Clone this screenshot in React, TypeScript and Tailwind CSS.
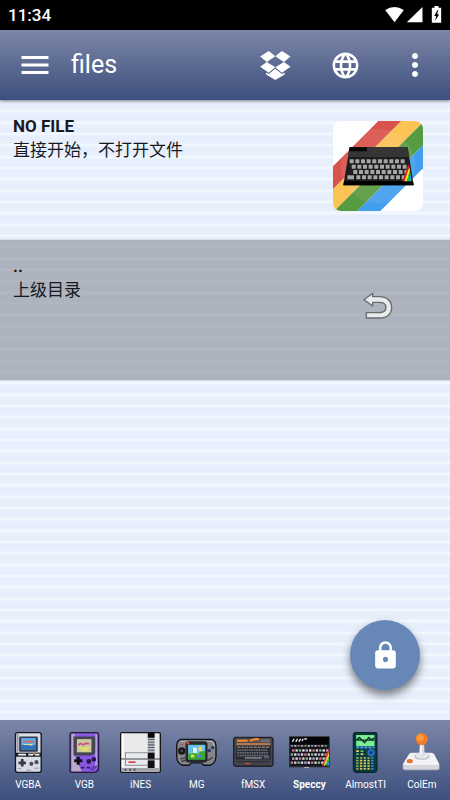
import React, { useState } from 'react';
import { MdLanguage, MdLock, MdMenu, MdMoreVert } from 'react-icons/md';

const range = (n: number) => Array.from({ length: n }, (_, i) => i);

const StatusBar: React.FC = () => (
  <div className="h-[30px] bg-black text-white flex items-center justify-between px-2">
    <span className="text-[17px] leading-[30px] font-medium">11:34</span>
    <svg viewBox="0 0 170 54" className="w-[57px] h-[18px]" fill="#fff">
      <path d="M0 12 Q28 -6 56 12 L28 49 Z" />
      <path d="M65 49 L112 3 L112 49 Z" />
      <path d="M140 5 h8 v-5 h12 v5 h8 v45 h-28 Z" />
      <path d="M157 12 L147 30 h6 l-3 14 L162 25 h-6 l3 -13 Z" fill="#000" />
    </svg>
  </div>
);

const DropboxIcon: React.FC = () => (
  <svg viewBox="0 0 93 88" className="w-[31px] h-[29px]" fill="#fff">
    <path d="M0 17 L26 0 L46 16 L20 33 Z" />
    <path d="M92 17 L66 0 L46 16 L72 33 Z" />
    <path d="M0 48 L20 33 L46 49 L26 66 Z" />
    <path d="M92 48 L72 33 L46 49 L66 66 Z" />
    <path d="M18 65 L26 70 L46 54 L66 70 L74 65 L74 71 L46 88 L18 71 Z" />
  </svg>
);

const SpectrumCover: React.FC = () => (
  <svg viewBox="0 0 270 270" className="w-[90px] h-[90px] rounded-lg bg-white">
    <path d="M136 0 H205 L0 205 V136 Z" fill="#d9534d" />
    <path d="M205 0 H270 V4 L4 270 H0 V205 Z" fill="#fbc254" />
    <path d="M270 4 V73 L73 270 H4 Z" fill="#579b41" />
    <path d="M270 73 V142 L142 270 H73 Z" fill="#439eee" />
    <circle cx="135" cy="135" r="112" fill="#fff" opacity="0.08" />
    <path d="M50 79 H224 L242 193 H31 Z" fill="#1d1d1d" />
    <path d="M50 79 H224 L228 106 H45 Z" fill="#353535" />
    <path d="M50 79 H102 V91 H48 Z" fill="#050505" />
    <path d="M33 181 H240 L242 193 H31 Z" fill="#000" />
    <path d="M45 106 H228" stroke="#4a4a4a" strokeWidth="2" />
    {[50, 56, 61].map((x, row) => (
      <g key={x} fill="#a6a6aa">
        {range(10).map(i => (
          <rect key={i} x={x + i * 17} y={115 + row * 16} width="12" height="12" rx="1" />
        ))}
      </g>
    ))}
    <g fill="#a6a6aa">
      <rect x="43" y="163" width="20" height="12" />
      {range(8).map(i => (
        <rect key={i} x={70 + i * 17} y="163" width="12" height="12" rx="1" />
      ))}
      <rect x="206" y="163" width="20" height="12" />
    </g>
    <path d="M227 130 L229 138 L215 181 H208 Z" fill="#f01818" />
    <path d="M229 138 L231 149 L221 181 H215 Z" fill="#ffe81c" />
    <path d="M231 149 L233 162 L227 181 H221 Z" fill="#23c436" />
    <path d="M233 162 L236 181 H227 Z" fill="#1ba6f0" />
  </svg>
);

const BackArrow: React.FC = () => (
  <svg viewBox="0 0 90 84" className="w-[30px] h-[28px]">
    <path
      d="M3 23 L29 4 V14 H48 C72 14 86 27 86 46 C86 66 72 78 50 78 H10 V62 H48 C62 62 69 56 69 46 C69 36 62 31 48 31 H29 V42 Z"
      fill="#e9eaeb"
      stroke="#686b70"
      strokeWidth="4"
      strokeLinejoin="round"
    />
  </svg>
);

const VgbaIcon = () => (
  <>
    <rect x="22" y="2" width="76" height="117" rx="6" fill="#d9dce4" stroke="#14161c" strokeWidth="4" />
    <rect x="26" y="6" width="5" height="52" fill="#8f97a8" />
    <rect x="33" y="13" width="55" height="45" rx="3" fill="#363c52" />
    <rect x="39" y="18" width="43" height="34" fill="#62aeea" />
    <path d="M39 40 L55 35 L68 42 L82 36 V52 H39 Z" fill="#2e71bd" />
    <path d="M45 31 l7 -5 5 5 6 -5 7 4 7 -2" stroke="#e26345" strokeWidth="4" fill="none" />
    <path d="M46 37 h26" stroke="#f2dc83" strokeWidth="3" />
    <rect x="22" y="61" width="76" height="12" fill="#1a1d26" />
    <path d="M30 67 H53 M60 67 H74 M80 67 H93" stroke="#f3f4f8" strokeWidth="5" />
    <circle cx="77" cy="65" r="3" fill="#ef9b36" />
    <path d="M42 80 V102 M31 91 H53" stroke="#363a46" strokeWidth="8" />
    <circle cx="69" cy="94" r="6" fill="#4a4e5b" />
    <circle cx="84" cy="89" r="6" fill="#4a4e5b" />
    <path d="M28 108 H40 M54 113 H68 M78 107 H91" stroke="#a7adbb" strokeWidth="4" />
  </>
);

const VgbIcon = () => (
  <>
    <path d="M23 2 H97 Q102 2 102 8 V104 Q102 118 88 119 H23 Q18 119 18 114 V8 Q18 2 23 2 Z" fill="#8858e2" stroke="#241b38" strokeWidth="4" />
    <path d="M22 6 H32 V72 L52 116 H22 Z" fill="#b8aac9" />
    <path d="M92 7 h6 v94 h-6 Z" fill="#b69bf1" />
    <path d="M28 13 H92 V62 Q88 69 78 69 H28 Z" fill="#474454" />
    <rect x="38" y="21" width="43" height="39" fill="#c9c99f" />
    <path d="M42 38 l8 -4 7 4 8 -5 10 2" stroke="#d24a87" strokeWidth="5" fill="none" />
    <path d="M43 47 H74 M52 53 H72" stroke="#e6e454" strokeWidth="4" />
    <path d="M42 73 V97 M30 85 H54" stroke="#100d18" strokeWidth="9" />
    <circle cx="73" cy="87" r="7" fill="#29194a" />
    <circle cx="88" cy="81" r="7" fill="#29194a" />
    <path d="M50 105 h10 M67 105 h10" stroke="#34215f" strokeWidth="5" />
    <path d="M84 113 L97 99 M78 112 L90 99" stroke="#4d2d9a" strokeWidth="3" />
  </>
);

const InesIcon = () => (
  <>
    <rect x="2" y="2" width="117" height="117" rx="4" fill="#e9eaec" stroke="#151518" strokeWidth="4" />
    <rect x="5" y="5" width="5" height="100" fill="#fff" />
    <rect x="82" y="3" width="20" height="112" fill="#b8bbc2" />
    <rect x="82" y="3" width="20" height="14" fill="#08080a" />
    <path d="M82 22 h20 M82 30 h20 M82 38 h20 M82 46 h20 M82 54 h20" stroke="#5d616b" strokeWidth="3" />
    <rect x="82" y="61" width="20" height="19" fill="#101014" />
    <rect x="82" y="84" width="20" height="25" fill="#101014" />
    <path d="M3 80 H118" stroke="#40424a" strokeWidth="3" />
    <path d="M82 98 H16 V61 H82" fill="none" stroke="#8b8e96" strokeWidth="3" />
    <path d="M25 89 H46" stroke="#d5434a" strokeWidth="5" />
    <path d="M5 106 H115 V116 H5 Z" fill="#a1a4ad" />
    <path d="M16 108 v7 M30 108 v7 M43 108 v7" stroke="#565962" strokeWidth="5" />
  </>
);

const MgIcon = () => (
  <>
    <path d="M14 22 H105 Q118 25 118 42 V73 Q117 92 101 98 H82 L74 91 H46 L38 98 H18 Q3 92 2 73 V42 Q2 26 14 22 Z" fill="#85868b" stroke="#111216" strokeWidth="4" />
    <path d="M14 27 H104 Q112 31 113 43" stroke="#b8babd" strokeWidth="3" fill="none" />
    <rect x="28" y="27" width="65" height="63" rx="9" fill="#25272c" />
    <rect x="36" y="38" width="50" height="43" fill="#57b943" />
    <rect x="36" y="38" width="50" height="25" fill="#69bff0" />
    <path d="M36 65 h13 V49 h9 v18 h11 V57 h17 v24 H36 Z" fill="#3ba638" />
    <rect x="50" y="46" width="11" height="16" fill="#e9f3ff" />
    <rect x="67" y="43" width="10" height="14" fill="#f4d74a" />
    <rect x="44" y="67" width="10" height="8" fill="#e6df46" />
    <rect x="64" y="68" width="10" height="7" fill="#5f7cf1" />
    <circle cx="17" cy="37" r="3" fill="#d24141" />
    <circle cx="35" cy="33" r="4" fill="#e94545" />
    <circle cx="17" cy="56" r="11" fill="#15171b" />
    <circle cx="17" cy="56" r="4" fill="#454951" />
    <circle cx="98" cy="55" r="5" fill="#25375f" />
    <circle cx="108" cy="46" r="5" fill="#25375f" />
    <path d="M13 80 L29 75 M16 87 L32 82 M93 85 L108 75" stroke="#3b3d42" strokeWidth="4" />
  </>
);

const FmsxIcon = () => (
  <>
    <path d="M7 16 H113 Q118 17 118 22 V94 Q118 101 111 101 H9 Q2 101 2 94 V22 Q3 17 7 16 Z" fill="#44454c" stroke="#202127" strokeWidth="4" />
    <rect x="10" y="20" width="100" height="11" fill="#62534e" />
    <path d="M12 26 H43 M50 26 L66 21 H76" stroke="#f18a31" strokeWidth="6" />
    <path d="M82 23 h27 M82 28 h27" stroke="#8b8e98" strokeWidth="2" />
    <rect x="10" y="33" width="100" height="5" fill="#c98350" />
    <rect x="9" y="43" width="102" height="38" fill="#282a31" />
    <path d="M13 45 H107" stroke="#b7977f" strokeWidth="3" strokeDasharray="9 3" />
    {range(3).map(row => (
      <g key={row} fill="#6b6f7b">
        {range(13).map(i => (
          <rect key={i} x={12 + i * 7 + row} y={51 + row * 8} width="5" height="5" />
        ))}
      </g>
    ))}
    <rect x="35" y="74" width="50" height="5" fill="#7b7f8b" />
    <path d="M91 69 h16 v9 h-16 Z" fill="#5b606e" />
    <path d="M10 88 H109" stroke="#292a30" strokeWidth="3" />
    <path d="M36 93 h14" stroke="#dd4338" strokeWidth="4" />
  </>
);

const keyTints = ['#b9a4dd', '#dddfe8', '#cf7d86', '#d3d4dc', '#7fbd83', '#dedfe5'];

const SpeccyIcon = () => (
  <>
    <rect x="0" y="13" width="120" height="90" rx="3" fill="#15151b" stroke="#3e404a" strokeWidth="3" />
    <rect x="3" y="15" width="114" height="20" fill="#050507" />
    <path d="M10 29 l5 -9 M20 29 l5 -9 M29 29 l5 -9 M38 27 l4 -7 M45 21 l8 -1" stroke="#e6e6ec" strokeWidth="4" />
    {range(5).map(row => (
      <g key={row}>
        {range(11).map(i => (
          <rect
            key={i}
            x={5 + i * 10 + (row % 2) * 4}
            y={39 + row * 12}
            width="7"
            height={row === 0 ? 4 : 7}
            fill={keyTints[(i + row * 2) % keyTints.length]}
          />
        ))}
      </g>
    ))}
    <path d="M118 48 V60 L102 99 H97 Z" fill="#e53a36" />
    <path d="M118 60 V72 L107 99 H102 Z" fill="#f2e136" />
    <path d="M118 72 V84 L112 99 H107 Z" fill="#36c44b" />
    <path d="M118 84 V99 H112 Z" fill="#4595ed" />
    <path d="M45 105 h14" stroke="#b9bdca" strokeWidth="3" />
  </>
);

const AlmostTiIcon = () => (
  <>
    <path d="M29 2 H91 Q94 3 94 9 V110 Q93 119 85 119 H35 Q26 119 25 110 V9 Q25 4 29 2 Z" fill="#093c3c" stroke="#06272c" strokeWidth="4" />
    <rect x="33" y="9" width="54" height="33" fill="#7cec95" />
    <path d="M33 24 L42 16 L58 32 L70 16 L77 23 L87 17 M33 24 H87" stroke="#082f20" strokeWidth="4" fill="none" />
    <path d="M33 46 H87" stroke="#4d96ef" strokeWidth="6" strokeDasharray="9 3" />
    <circle cx="77" cy="61" r="11" fill="#266ec7" />
    <circle cx="77" cy="61" r="5" fill="#0d3c76" />
    <rect x="33" y="54" width="8" height="5" fill="#f1d34d" />
    <rect x="46" y="54" width="8" height="5" fill="#72c37d" />
    <rect x="33" y="63" width="8" height="5" fill="#76a987" />
    <rect x="46" y="63" width="8" height="5" fill="#ddd26c" />
    {range(5).map(row => (
      <g key={row}>
        {range(5).map(i => (
          <rect
            key={i}
            x={33 + i * 11}
            y={74 + row * 8}
            width="7"
            height="5"
            fill={i === 4 ? '#3f85de' : row > 0 && i > 0 ? '#e3c659' : '#a5a35c'}
          />
        ))}
      </g>
    ))}
  </>
);

const ColemIcon = () => (
  <>
    <path d="M23 67 L98 67 L114 97 V107 Q114 113 107 113 H12 Q5 113 5 107 V96 Z" fill="#aeb2ba" />
    <path d="M24 65 Q26 61 31 61 H90 Q95 61 98 66 L112 93 Q114 98 107 99 H12 Q4 98 7 92 Z" fill="#f3f3f5" />
    <path d="M7 98 H112 V106 Q110 110 105 110 H13 Q7 110 7 105 Z" fill="#d6d8dd" />
    <ellipse cx="62" cy="72" rx="23" ry="11" fill="#c4c7ce" />
    <ellipse cx="62" cy="69" rx="18" ry="9" fill="#e8e9ed" />
    <path d="M56 34 H68 L70 69 Q62 74 53 69 Z" fill="#dadce2" />
    <path d="M57 38 h4 v29 h-4 Z" fill="#fff" />
    <circle cx="61" cy="21" r="18" fill="#ee7d27" />
    <circle cx="57" cy="17" r="10" fill="#ff9a3d" />
    <ellipse cx="26" cy="86" rx="9" ry="6" fill="#e57431" />
  </>
);

interface Emulator {
  name: string;
  Icon: React.FC;
}

const emulators: Emulator[] = [
  { name: 'VGBA', Icon: VgbaIcon },
  { name: 'VGB', Icon: VgbIcon },
  { name: 'iNES', Icon: InesIcon },
  { name: 'MG', Icon: MgIcon },
  { name: 'fMSX', Icon: FmsxIcon },
  { name: 'Speccy', Icon: SpeccyIcon },
  { name: 'AlmostTI', Icon: AlmostTiIcon },
  { name: 'ColEm', Icon: ColemIcon },
];

interface FileRowProps {
  title: string;
  subtitle: string;
  selected?: boolean;
  children: React.ReactNode;
}

const FileRow: React.FC<FileRowProps> = ({ title, subtitle, selected, children }) => (
  <li>
    <button
      className={`flex w-full h-[140px] items-start justify-between pl-[13px] pr-[27px] text-left text-[#17191e] ${
        selected ? 'bg-[#71757f80] shadow-[0_0_1px_#8a8d94]' : ''
      }`}
    >
      <span className="flex flex-col pt-[14px] text-[17px] leading-[24px]">
        <span className="font-bold">{title}</span>
        <span>{subtitle}</span>
      </span>
      <span className="mt-[21px] flex w-[90px] h-[90px] items-center justify-center">{children}</span>
    </button>
  </li>
);

const App: React.FC = () => {
  const [active, setActive] = useState('Speccy');

  return (
    <div className="min-h-screen flex flex-col font-[Roboto,'Noto_Sans_CJK_SC',sans-serif]">
      <StatusBar />

      <header className="relative z-10 h-[70px] flex items-center bg-linear-to-b from-[#7d87a8] to-[#3d4f7d] text-white shadow-[0_1px_3px_rgba(0,0,0,0.5)]">
        <button aria-label="Menu" className="ml-[17px]">
          <MdMenu size={36} />
        </button>
        <h1 className="ml-[18px] flex-1 text-[25px] leading-[32px]">files</h1>
        <button aria-label="Dropbox" className="w-[70px] flex justify-center">
          <DropboxIcon />
        </button>
        <button aria-label="Web" className="w-[70px] flex justify-center">
          <MdLanguage size={31} />
        </button>
        <button aria-label="More" className="w-[70px] flex justify-center">
          <MdMoreVert size={36} />
        </button>
      </header>

      <main className="relative flex-1 bg-[repeating-linear-gradient(to_bottom,#f1f8ff_0px,#e7effd_2px,#e7effd_9px,#f1f8ff_10px,#f1f8ff_12px,#e7effd_13px,#e7effd_21px,#f1f8ff_22px,#f1f8ff_24px,#e7effd_25px,#e7effd_32px,#f1f8ff_33px,#f1f8ff_34px)]">
        <ul>
          <FileRow title="NO FILE" subtitle="直接开始，不打开文件">
            <SpectrumCover />
          </FileRow>
          <FileRow title=".." subtitle="上级目录" selected>
            <BackArrow />
          </FileRow>
        </ul>
        <button
          aria-label="Lock"
          className="absolute right-[30px] bottom-[30px] w-[70px] h-[70px] rounded-full bg-[#6788b7] text-white flex items-center justify-center shadow-[0_5px_9px_rgba(0,0,0,0.5)]"
        >
          <MdLock size={31} />
        </button>
      </main>

      <nav className="h-[80px] flex pt-3 bg-linear-to-b from-[#7d87a8] to-[#3d4f7d] text-white">
        {emulators.map(({ name, Icon }) => (
          <button
            key={name}
            onClick={() => setActive(name)}
            className="flex-1 basis-0 min-w-0 flex flex-col items-center gap-1"
          >
            <svg viewBox="0 0 121 121" className="w-[41px] h-[41px]">
              <Icon />
            </svg>
            <span className={`text-[10px] leading-[16px] ${name === active ? 'font-bold' : ''}`}>{name}</span>
          </button>
        ))}
      </nav>
    </div>
  );
};

export default App;
